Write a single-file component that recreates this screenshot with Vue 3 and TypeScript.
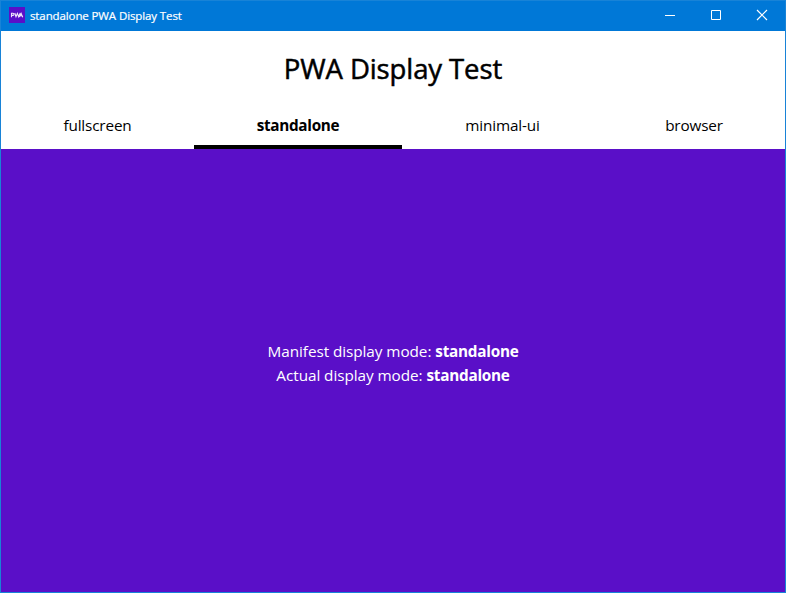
<script setup lang="ts">
type DisplayMode = 'fullscreen' | 'standalone' | 'minimal-ui' | 'browser'

const modes: DisplayMode[] = ['fullscreen', 'standalone', 'minimal-ui', 'browser']
const current: DisplayMode = 'standalone'
</script>

<template>
  <div class="window">
    <header class="titlebar">
      <svg class="app-icon" width="16" height="16" viewBox="0 0 16 16">
        <rect width="16" height="16" fill="#5a0fc8" />
        <g fill="none" stroke="#fff" stroke-width="1.1" stroke-opacity="0.9">
          <path d="M2.5 10.2V6.3H4Q5 6.3 5 7.3T4 8.4H2.8" />
          <path d="M5.8 6L7 9.7L8.4 6.5L9.7 9.7L11.2 6" />
          <path d="M10.4 10L12.1 6.3L13.7 10.2M11.4 8.8H13" />
        </g>
      </svg>
      <span class="caption">standalone PWA Display Test</span>
      <div class="controls">
        <svg width="46" height="30" viewBox="0 0 46 30"><path d="M17 14.5H27" /></svg>
        <svg width="46" height="30" viewBox="0 0 46 30"><path d="M17.5 9.5H26.5V18.5H17.5Z" /></svg>
        <svg width="46" height="30" viewBox="0 0 46 30"><path class="cross" d="M17 9L27 19M27 9L17 19" /></svg>
      </div>
    </header>
    <h1 class="heading">PWA Display Test</h1>
    <nav class="tabs">
      <a v-for="mode in modes" :key="mode" class="tab" :class="{ active: mode === current }">{{ mode }}</a>
    </nav>
    <main class="content">
      <p>Manifest display mode: <strong>{{ current }}</strong></p>
      <p>Actual display mode: <strong>{{ current }}</strong></p>
    </main>
  </div>
</template>

<style>
body {
  margin: 0;
  overflow: hidden;
}
</style>

<style scoped>
.window {
  box-sizing: border-box;
  width: 786px;
  height: 593px;
  display: flex;
  flex-direction: column;
  border: 1px solid #1883d7;
  background: #fff;
  color: #000;
  font-family: "Open Sans", "Noto Sans", sans-serif;
  font-size: 15.3px;
}
.titlebar {
  height: 30px;
  flex: none;
  display: flex;
  align-items: center;
  background: #0078d7;
  color: #fff;
}
.app-icon {
  margin: 0 5px 2px 8px;
}
.caption {
  font-size: 11.5px;
  line-height: 16px;
  letter-spacing: -0.11px;
  white-space: nowrap;
  -webkit-text-stroke: 0.2px #fff;
}
.controls {
  display: flex;
  margin-left: auto;
  margin-right: -1px;
}
.controls path {
  fill: none;
  stroke: #fff;
  stroke-width: 1;
}
.controls .cross {
  stroke-width: 1.2;
}
.heading {
  height: 76px;
  flex: none;
  margin: 0;
  text-align: center;
  font-size: 27.5px;
  line-height: 76px;
  font-weight: 400;
  letter-spacing: -0.1px;
  -webkit-text-stroke: 0.5px #000;
}
.tabs {
  height: 42px;
  flex: none;
  display: grid;
  grid-template-columns: 193px 208px 201px 182px;
}
.tab {
  box-sizing: border-box;
  border-bottom: 4px solid transparent;
  text-align: center;
  line-height: 37px;
  font-weight: 400;
  letter-spacing: -0.15px;
}
.tab.active {
  border-color: #000;
  font-weight: 700;
  letter-spacing: -0.3px;
}
.content {
  flex: 1;
  display: flex;
  flex-direction: column;
  justify-content: center;
  padding-bottom: 16px;
  background: #5a0fc8;
  color: #fff;
  text-align: center;
}
.content p {
  margin: 0;
  height: 24px;
  line-height: 24px;
  letter-spacing: -0.06px;
}
.content strong {
  letter-spacing: -0.25px;
}
</style>
